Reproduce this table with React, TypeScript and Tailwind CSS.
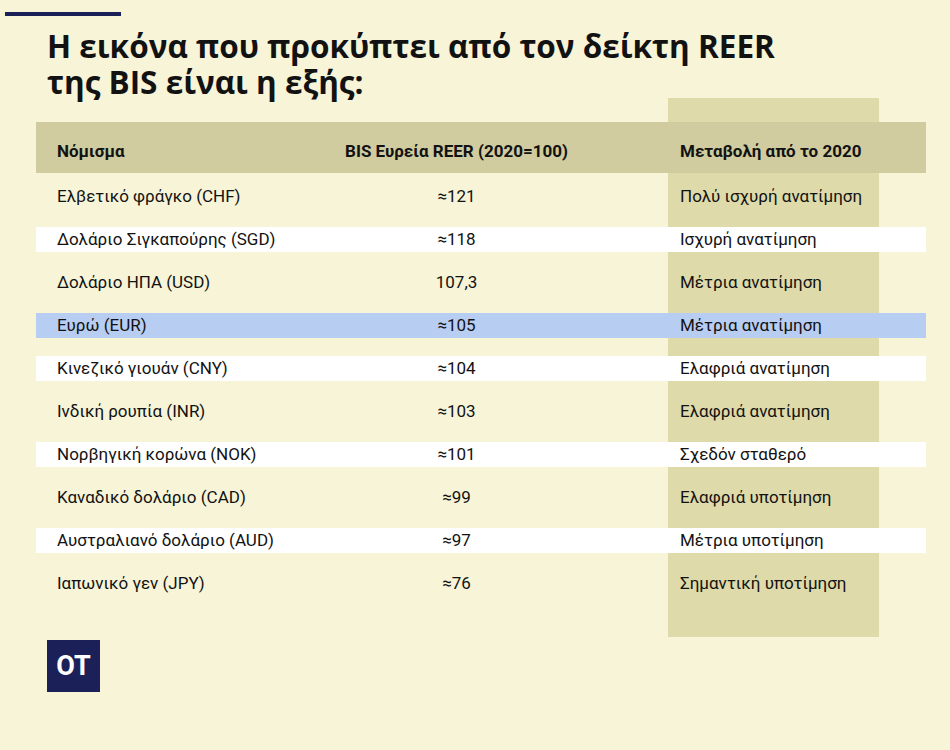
import React from "react";

type Row = { name: string; value: string; change: string; band?: "white" | "blue" };

const rows: Row[] = [
  { name: "Ελβετικό φράγκο (CHF)", value: "≈121", change: "Πολύ ισχυρή ανατίμηση" },
  { name: "Δολάριο Σιγκαπούρης (SGD)", value: "≈118", change: "Ισχυρή ανατίμηση", band: "white" },
  { name: "Δολάριο ΗΠΑ (USD)", value: "107,3", change: "Μέτρια ανατίμηση" },
  { name: "Ευρώ (EUR)", value: "≈105", change: "Μέτρια ανατίμηση", band: "blue" },
  { name: "Κινεζικό γιουάν (CNY)", value: "≈104", change: "Ελαφριά ανατίμηση", band: "white" },
  { name: "Ινδική ρουπία (INR)", value: "≈103", change: "Ελαφριά ανατίμηση" },
  { name: "Νορβηγική κορώνα (NOK)", value: "≈101", change: "Σχεδόν σταθερό", band: "white" },
  { name: "Καναδικό δολάριο (CAD)", value: "≈99", change: "Ελαφριά υποτίμηση" },
  { name: "Αυστραλιανό δολάριο (AUD)", value: "≈97", change: "Μέτρια υποτίμηση", band: "white" },
  { name: "Ιαπωνικό γεν (JPY)", value: "≈76", change: "Σημαντική υποτίμηση" },
];

const cols = "grid grid-cols-[209px_423px_211px_47px] items-center whitespace-nowrap";

export default function App() {
  return (
    <div className="h-[750px] w-[950px] overflow-hidden bg-[#f7f4d8] text-[#121212] [font-family:Roboto,'Noto_Sans',sans-serif]">
      <div className="ml-[5px] pt-[12px]">
        <div className="h-[4px] w-[116px] bg-[#1b2058]" />
      </div>

      <h1 className="ml-[47px] mt-[12px] text-[31.5px] font-bold leading-[36px] [font-family:'Open_Sans',sans-serif]">
        Η εικόνα που προκύπτει από τον δείκτη REER
        <br />
        της BIS είναι η εξής:
      </h1>

      <div className="relative ml-[36px] mt-[-2px] w-[890px] pt-[24px] pb-[32px]">
        {/* highlighted change column behind the table */}
        <div className="absolute left-[632px] top-0 bottom-0 w-[211px] bg-[#dedaa9]" />

        <div className="relative">
          <div className={`${cols} h-[51px] bg-[#d0cca0] text-[17px] font-bold`}>
            <div className="pl-[21px] pt-[8px]">Νόμισμα</div>
            <div className="pt-[8px] text-center">BIS Ευρεία REER (2020=100)</div>
            <div className="pl-[12px] pt-[8px]">Μεταβολή από το 2020</div>
            <div />
          </div>

          <div className="pt-[2px]">
            {rows.map((r) => (
              <div key={r.name} className="flex h-[43px] items-center">
                <div
                  className={`${cols} h-[25px] w-full text-[17px] ${
                    r.band === "white" ? "bg-white" : r.band === "blue" ? "bg-[#b8cdf2]" : ""
                  }`}
                >
                  <div className="pl-[21px]">{r.name}</div>
                  <div className="text-center">{r.value}</div>
                  <div className="pl-[12px]">{r.change}</div>
                  <div />
                </div>
              </div>
            ))}
          </div>
        </div>
      </div>

      <div className="ml-[47px] mt-[3px] flex h-[52px] w-[53px] items-center justify-center bg-[#1b2058] text-[27px] font-bold text-white">
        OT
      </div>
    </div>
  );
}
